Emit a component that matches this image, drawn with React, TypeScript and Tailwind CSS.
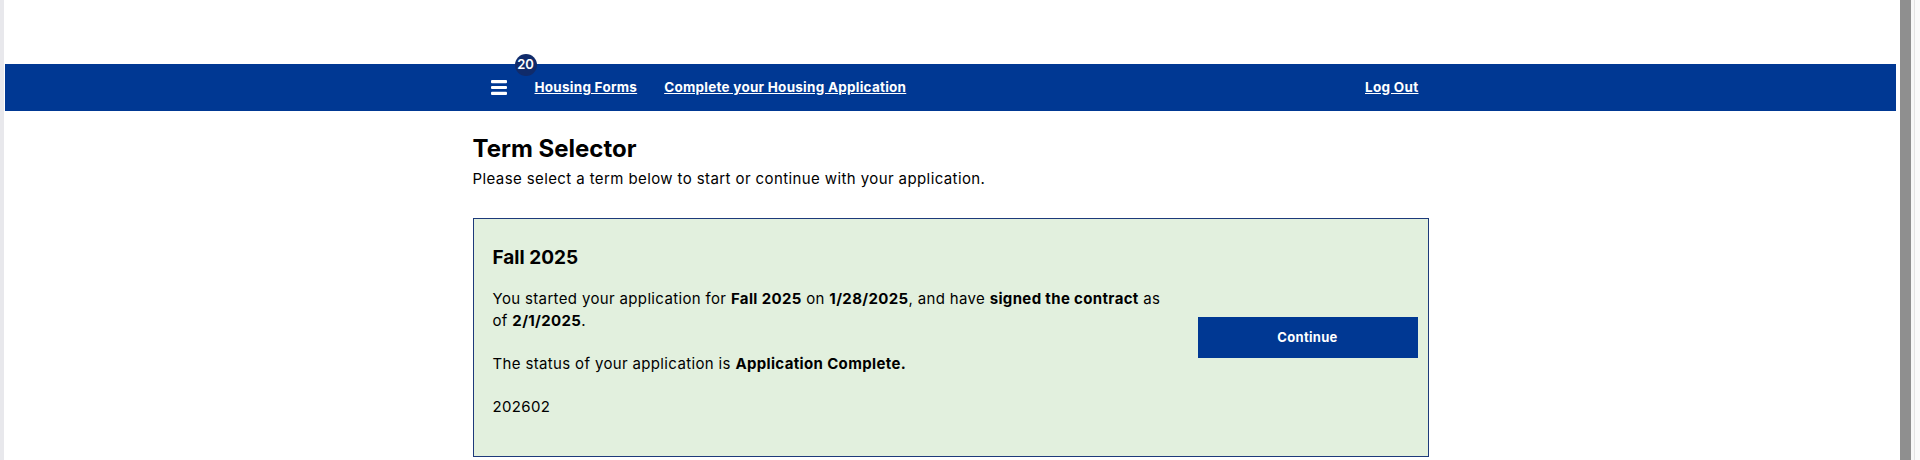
import React from 'react';

const font = { fontFamily: 'Inter, "Noto Sans", Arial, sans-serif' };

const Hamburger: React.FC = () => (
  <svg width="16" height="15" viewBox="0 0 16 15" className="block">
    <rect x="0" y="0" width="16" height="3.2" rx="1" fill="white" />
    <rect x="0" y="5.9" width="16" height="3.2" rx="1" fill="white" />
    <rect x="0" y="11.8" width="16" height="3.2" rx="1" fill="white" />
  </svg>
);

const TopNav: React.FC = () => (
  <nav className="mt-[64px] h-[47px] bg-[#003893]">
    <div className="mx-auto flex h-full w-[956px] items-center pl-[18px] pr-[10px]">
      <div className="relative mr-[28px]">
        <Hamburger />
        <span className="absolute left-[24px] top-[-26px] flex h-[22px] w-[22px] items-center justify-center rounded-full bg-[#102b6a] text-[13px] font-semibold text-white">
          20
        </span>
      </div>
      <a href="#" className="mr-[27px] text-[13.5px] font-bold text-white underline tracking-[0.25px]">
        Housing Forms
      </a>
      <a href="#" className="text-[13.5px] font-bold text-white underline tracking-[0.25px]">
        Complete your Housing Application
      </a>
      <a href="#" className="ml-auto text-[13.5px] font-bold text-white underline tracking-[0.3px]">
        Log Out
      </a>
    </div>
  </nav>
);

const TermCard: React.FC = () => (
  <div className="mt-[28px] flex items-center border border-[#1d3a7a] bg-[#e2f0de] pl-[19px] pr-[10px] py-[21px]">
    <div className="w-[690px] text-[15px] leading-[22px] tracking-[0.35px] text-black">
      <h2 className="mt-[4px] mb-[16px] text-[19px] font-bold leading-[28px] tracking-[0px]">Fall 2025</h2>
      <p className="mb-[21px]">
        You started your application for <b>Fall 2025</b> on <b>1/28/2025</b>, and have{' '}
        <b>signed the contract</b> as
        <br />
        of <b>2/1/2025</b>.
      </p>
      <p className="mb-[21px]">
        The status of your application is <b>Application Complete.</b>
      </p>
      <p className="mb-[17px]">202602</p>
    </div>
    <div className="ml-auto">
      <button className="h-[41px] w-[220px] bg-[#003893] text-[13px] font-bold tracking-[0.3px] text-white">
        Continue
      </button>
    </div>
  </div>
);

export default function App() {
  return (
    <div className="flex h-[460px] w-full overflow-hidden bg-white" style={font}>
      <div className="w-[4px] bg-[#e8e8ec]" />
      <div className="w-[1px] bg-white" />
      <main className="flex-1">
        <TopNav />
        <div className="mx-auto w-[956px]">
          <h1 className="mt-[23px] text-[24px] font-bold leading-[30px] tracking-[0px] text-black">
            Term Selector
          </h1>
          <p className="mt-[4px] text-[15px] leading-[22px] tracking-[0.4px] text-black">
            Please select a term below to start or continue with your application.
          </p>
          <TermCard />
        </div>
      </main>
      <div className="w-[4px] bg-white" />
      <div className="w-[11px] bg-[#8f8f8f]" />
      <div className="w-[3px] bg-[#f7f7f7]" />
      <div className="w-[1px] bg-[#e3e3e3]" />
      <div className="w-[5px] bg-[#fafafa]" />
    </div>
  );
}
